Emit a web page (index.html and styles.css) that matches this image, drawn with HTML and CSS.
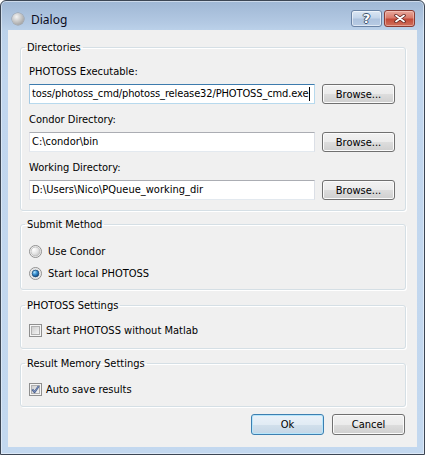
FILE: index.html
```html
<!DOCTYPE html>
<html>
<head>
<meta charset="utf-8">
<title>Dialog</title>
<link rel="stylesheet" href="styles.css">
</head>
<body>
<div class="window">
  <div class="titlebar">
    <span class="app-icon"></span>
    <span class="title">Dialog</span>
    <div class="caption-buttons">
      <span class="cap-btn help">?</span>
      <span class="cap-btn close">
        <svg width="12" height="9" viewBox="0 0 12 9">
          <path d="M2 1.5 L10 7.5 M10 1.5 L2 7.5" stroke="#5a1f1a" stroke-width="3.4" stroke-linecap="round"/>
          <path d="M2 1.5 L10 7.5 M10 1.5 L2 7.5" stroke="#ffffff" stroke-width="1.8" stroke-linecap="round"/>
        </svg>
      </span>
    </div>
  </div>
  <div class="client">
    <fieldset class="group group-dirs">
      <legend>Directories</legend>
      <div class="field-label first">PHOTOSS Executable:</div>
      <div class="field-row">
        <div class="edit focused"><span class="edit-text">toss/photoss_cmd/photoss_release32/PHOTOSS_cmd.exe</span><span class="caret"></span></div>
        <button class="btn">Browse...</button>
      </div>
      <div class="field-label">Condor Directory:</div>
      <div class="field-row">
        <div class="edit"><span class="edit-text">C:\condor\bin</span></div>
        <button class="btn">Browse...</button>
      </div>
      <div class="field-label">Working Directory:</div>
      <div class="field-row">
        <div class="edit"><span class="edit-text">D:\Users\Nico\PQueue_working_dir</span></div>
        <button class="btn">Browse...</button>
      </div>
    </fieldset>

    <fieldset class="group group-submit">
      <legend>Submit Method</legend>
      <div class="option">
        <svg class="radio" width="13" height="13" viewBox="0 0 13 13">
          <defs>
            <radialGradient id="rg1" cx="0.3" cy="0.3" r="0.8">
              <stop offset="0" stop-color="#ffffff"/>
              <stop offset="0.55" stop-color="#e6e6e6"/>
              <stop offset="1" stop-color="#c4c4c4"/>
            </radialGradient>
          </defs>
          <circle cx="6.5" cy="6.5" r="6" fill="#f4f4f4" stroke="#8f8f8f"/>
          <circle cx="6.5" cy="6.5" r="4.5" fill="url(#rg1)" stroke="#b9b9b9" stroke-width="0.8"/>
        </svg>
        <span>Use Condor</span>
      </div>
      <div class="option">
        <svg class="radio" width="13" height="13" viewBox="0 0 13 13">
          <defs>
            <radialGradient id="rg2" cx="0.35" cy="0.3" r="0.75">
              <stop offset="0" stop-color="#b8e6fd"/>
              <stop offset="0.45" stop-color="#3c94d4"/>
              <stop offset="1" stop-color="#0d3f74"/>
            </radialGradient>
          </defs>
          <circle cx="6.5" cy="6.5" r="6" fill="#f4f4f4" stroke="#8f8f8f"/>
          <circle cx="6.5" cy="6.5" r="4.6" fill="#ffffff" stroke="#c2c2c2" stroke-width="0.6"/>
          <circle cx="6.5" cy="6.5" r="3.4" fill="url(#rg2)" stroke="#1d4b79" stroke-width="0.8"/>
        </svg>
        <span>Start local PHOTOSS</span>
      </div>
    </fieldset>

    <fieldset class="group group-settings">
      <legend>PHOTOSS Settings</legend>
      <div class="option check-option">
        <svg class="checkbox" width="13" height="13" viewBox="0 0 13 13">
          <defs>
            <linearGradient id="cg1" x1="0" y1="0" x2="1" y2="1">
              <stop offset="0" stop-color="#cbcbcb"/>
              <stop offset="1" stop-color="#f7f7f7"/>
            </linearGradient>
          </defs>
          <rect x="0.5" y="0.5" width="12" height="12" fill="#f5f5f5" stroke="#8f8f8f"/>
          <rect x="2.5" y="2.5" width="8" height="8" fill="url(#cg1)" stroke="#b0b0b0"/>
        </svg>
        <span>Start PHOTOSS without Matlab</span>
      </div>
    </fieldset>

    <fieldset class="group group-memory">
      <legend>Result Memory Settings</legend>
      <div class="option check-option">
        <svg class="checkbox" width="13" height="13" viewBox="0 0 13 13">
          <defs>
            <linearGradient id="cg2" x1="0" y1="0" x2="1" y2="1">
              <stop offset="0" stop-color="#cbcbcb"/>
              <stop offset="1" stop-color="#f7f7f7"/>
            </linearGradient>
          </defs>
          <rect x="0.5" y="0.5" width="12" height="12" fill="#f5f5f5" stroke="#8f8f8f"/>
          <rect x="2.5" y="2.5" width="8" height="8" fill="url(#cg2)" stroke="#b0b0b0"/>
          <path d="M3.3 6.3 L5.5 9.2 L9.8 3" fill="none" stroke="#4a5f8f" stroke-width="2" stroke-linejoin="round"/>
          <path d="M3.6 6.5 L5.5 8.9 L9.6 3.3" fill="none" stroke="#8fa6d0" stroke-width="0.7"/>
        </svg>
        <span>Auto save results</span>
      </div>
    </fieldset>

    <div class="dialog-buttons">
      <button class="btn btn-default">Ok</button>
      <button class="btn">Cancel</button>
    </div>
  </div>
</div>
</body>
</html>
```

FILE: styles.css
```css
html, body {
  margin: 0;
  padding: 0;
  background: #ffffff;
}

body {
  font-family: "DejaVu Sans Condensed", "DejaVu Sans", sans-serif;
  font-stretch: semi-condensed;
  font-size: 11px;
  color: #000000;
}

.window {
  box-sizing: border-box;
  width: 425px;
  height: 455px;
  border: 1px solid #3c4654;
  border-radius: 6px 6px 0 0;
  padding: 0 7px 7px 7px;
  background: linear-gradient(#9fb7d4 0px, #b3c9e3 22px, #bcd2ea 30px, #c1d6ee 80px, #c3d8ef 100%);
  box-shadow: inset 0 0 0 1px rgba(240, 246, 252, 0.55);
  display: flex;
  flex-direction: column;
}

.titlebar {
  height: 29px;
  display: flex;
  align-items: flex-start;
}

.app-icon {
  width: 12px;
  height: 12px;
  margin: 12px 0 0 4px;
  border-radius: 50%;
  background: radial-gradient(circle at 38% 32%, #f4f4f4 0%, #c6c6c6 45%, #8c8c8c 100%);
  box-shadow: 0 0 0 0.5px #9a9a9a;
  flex: none;
}

.title {
  margin: 10px 0 0 7px;
  font-family: "Noto Sans", "Open Sans", sans-serif;
  font-stretch: normal;
  font-size: 12px;
  line-height: 17px;
  color: #0c0c1e;
}

.caption-buttons {
  margin: 9px 2px 0 auto;
  display: flex;
  gap: 2px;
}

.cap-btn {
  box-sizing: border-box;
  width: 31px;
  height: 17px;
  border-radius: 3px;
  display: flex;
  align-items: center;
  justify-content: center;
}

.help {
  border: 1px solid #6a83a5;
  background: linear-gradient(#dce7f4 0%, #c4d5ea 45%, #aec3de 55%, #b7cbe4 100%);
  box-shadow: inset 0 0 0 1px rgba(255, 255, 255, 0.55);
  font-family: "DejaVu Sans", sans-serif;
  font-stretch: normal;
  font-weight: bold;
  font-size: 13px;
  line-height: 15px;
  color: #ffffff;
  text-shadow: -1px 0 0 #3f536e, 1px 0 0 #3f536e, 0 -1px 0 #3f536e, 0 1px 0 #3f536e;
}

.close {
  border: 1px solid #8a3b33;
  background: linear-gradient(#e9a99c 0%, #d97b6a 45%, #c34a38 55%, #d0705c 100%);
  box-shadow: inset 0 0 0 1px rgba(255, 220, 210, 0.45);
}

.client {
  flex: 1;
  background: #f0f0f0;
  padding: 0 11px 0 12px;
  display: flex;
  flex-direction: column;
}

.group {
  margin: 0;
  border: 1px solid #d5dfe5;
  border-radius: 3px;
  box-shadow: inset 1px 1px 0 #ffffff, 1px 1px 0 #ffffff;
  padding: 0 10px 0 8px;
  min-width: 0;
}

.group legend {
  padding: 0 2px;
  margin-left: -4px;
  line-height: 13px;
  font-size: 11px;
}

.group-dirs {
  margin-top: 11px;
  padding-top: 11px;
  padding-bottom: 10px;
}

.group-submit {
  margin-top: 7px;
  padding-top: 9px;
  padding-bottom: 5px;
}

.group-settings {
  margin-top: 9px;
  padding-top: 7px;
  padding-bottom: 7px;
}

.group-memory {
  margin-top: 8px;
  padding-top: 8px;
  padding-bottom: 6px;
}

.field-label {
  line-height: 13px;
  margin-top: 9px;
  margin-bottom: 6px;
}

.field-label.first {
  margin-top: 0;
}

.field-row {
  display: flex;
  align-items: center;
  gap: 7px;
}

.edit {
  box-sizing: border-box;
  width: 286px;
  height: 20px;
  background: #ffffff;
  border: 1px solid;
  border-color: #abadb3 #dbdfe6 #e3e9ef #e2e3ea;
  padding: 0 2px;
  display: flex;
  align-items: center;
  justify-content: flex-start;
  overflow: hidden;
  white-space: nowrap;
}

.edit.focused {
  border-color: #3d7bad #b7d9ed #b7d9ed #a4c9e3;
}

.edit-text {
  line-height: 16px;
  flex: none;
}

.edit.focused .edit-text {
  letter-spacing: -0.12px;
}

.caret {
  width: 1px;
  height: 14px;
  background: #000000;
  flex: none;
  margin-left: 1px;
}

.btn {
  box-sizing: border-box;
  width: 73px;
  height: 20px;
  padding: 0;
  border: 1px solid #707070;
  border-radius: 3px;
  background: linear-gradient(#f2f2f2 0%, #ebebeb 50%, #dddddd 50%, #cfcfcf 100%);
  box-shadow: inset 0 0 0 1px #fbfbfb;
  font-family: inherit;
  font-stretch: inherit;
  font-size: 11px;
  color: #000000;
  flex: none;
}

.btn-default {
  border-color: #3c7fb1;
  background: linear-gradient(#eaf2f9 0%, #e1ebf4 50%, #d2e0ec 50%, #c4d6e6 100%);
  box-shadow: inset 0 0 0 1px #b7e6fb;
}

.option {
  height: 22px;
  display: flex;
  align-items: center;
  gap: 6px;
  line-height: 13px;
}

.check-option {
  gap: 4px;
}

.radio, .checkbox {
  flex: none;
  display: block;
}

.dialog-buttons {
  margin-top: 7px;
  padding-right: 1px;
  display: flex;
  justify-content: flex-end;
  gap: 8px;
}

.dialog-buttons .btn {
  height: 21px;
}
```
